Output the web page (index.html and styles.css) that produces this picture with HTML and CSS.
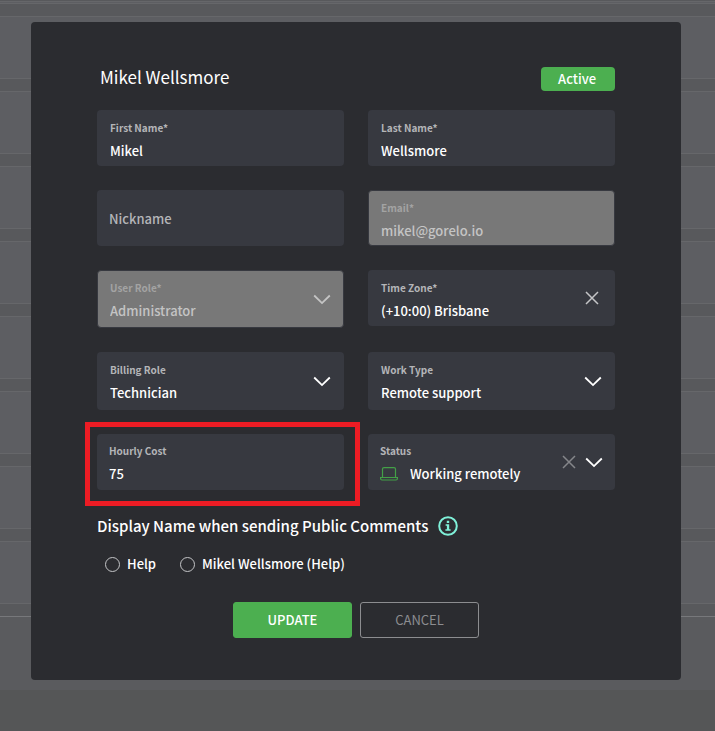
FILE: index.html
```
<!DOCTYPE html>
<html lang="en">
<head>
    <meta charset="UTF-8">
    <meta name="viewport" content="width=device-width, initial-scale=1">
    <title>Mikel Wellsmore</title>
    <link rel="stylesheet" href="styles.css">
</head>
<body>
    <svg class="sprite" aria-hidden="true">
        <symbol id="chevron" viewBox="0 0 18 18">
            <path d="M1.2 5.5 L9 13.1 L16.8 5.5" fill="none" stroke="currentColor" stroke-width="1.8"/>
        </symbol>
        <symbol id="cross" viewBox="0 0 18 18">
            <path d="M2 3 L14 15 M14 3 L2 15" fill="none" stroke="currentColor" stroke-width="1.5"/>
        </symbol>
    </svg>

    <main class="page">
        <form class="modal">
            <header class="modal-header">
                <h1>Mikel Wellsmore</h1>
                <span class="badge">Active</span>
            </header>

            <div class="fields">
                <div class="field">
                    <div class="field-main">
                        <label for="firstName">First Name*</label>
                        <input type="text" id="firstName" value="Mikel">
                    </div>
                </div>
                <div class="field">
                    <div class="field-main">
                        <label for="lastName">Last Name*</label>
                        <input type="text" id="lastName" value="Wellsmore">
                    </div>
                </div>
                <div class="field field-empty">
                    <div class="field-main">
                        <input type="text" id="nickname" placeholder="Nickname" aria-label="Nickname">
                    </div>
                </div>
                <div class="field field-disabled">
                    <div class="field-main">
                        <label for="email">Email*</label>
                        <input type="email" id="email" value="mikel@gorelo.io" disabled>
                    </div>
                </div>
                <div class="field field-disabled field-select">
                    <div class="field-main">
                        <label for="userRole">User Role*</label>
                        <select id="userRole" disabled><option>Administrator</option></select>
                    </div>
                    <svg class="icon"><use href="#chevron"/></svg>
                </div>
                <div class="field">
                    <div class="field-main">
                        <label for="timeZone">Time Zone*</label>
                        <select id="timeZone"><option>(+10:00) Brisbane</option></select>
                    </div>
                    <button type="button" class="clear" aria-label="Clear time zone"><svg class="icon"><use href="#cross"/></svg></button>
                </div>
                <div class="field field-select">
                    <div class="field-main">
                        <label for="billingRole">Billing Role</label>
                        <select id="billingRole"><option>Technician</option></select>
                    </div>
                    <svg class="icon"><use href="#chevron"/></svg>
                </div>
                <div class="field field-select">
                    <div class="field-main">
                        <label for="workType">Work Type</label>
                        <select id="workType"><option>Remote support</option></select>
                    </div>
                    <svg class="icon"><use href="#chevron"/></svg>
                </div>
                <div class="field field-marked">
                    <div class="field-main">
                        <label for="hourlyCost">Hourly Cost</label>
                        <input type="text" id="hourlyCost" value="75">
                    </div>
                </div>
                <div class="field field-status">
                    <div class="field-main">
                        <label for="status">Status</label>
                        <div class="status-value">
                            <svg class="laptop" viewBox="0 0 18 14" fill="none" stroke="currentColor" stroke-width="1.2">
                                <path d="M2.5 10.5 V2 Q2.5 .6 4 .6 H14 Q15.5 .6 15.5 2 V10.5"/>
                                <path d="M.6 10.5 H17.4 V11.5 Q17.4 13 16 13 H2 Q.6 13 .6 11.5 Z"/>
                            </svg>
                            <select id="status"><option>Working remotely</option></select>
                        </div>
                    </div>
                    <button type="button" class="clear clear-dim" aria-label="Clear status"><svg class="icon"><use href="#cross"/></svg></button>
                    <svg class="icon"><use href="#chevron"/></svg>
                </div>
            </div>

            <fieldset>
                <legend>
                    Display Name when sending Public Comments
                    <svg class="info" viewBox="0 0 20 20">
                        <circle cx="10" cy="10" r="8.8" fill="none" stroke="currentColor" stroke-width="2"/>
                        <path d="M8.8 4.8 H11.2 V7 H8.8 Z M7.6 8.2 H11.2 V13.2 H12.6 V14.8 H7.4 V13.2 H8.9 V9.7 H7.6 Z" fill="currentColor"/>
                    </svg>
                </legend>
                <div class="radios">
                    <label><input type="radio" name="displayName">Help</label>
                    <label><input type="radio" name="displayName">Mikel Wellsmore (Help)</label>
                </div>
            </fieldset>

            <div class="actions">
                <button type="submit" class="btn btn-primary">UPDATE</button>
                <button type="button" class="btn">CANCEL</button>
            </div>
        </form>
    </main>
</body>
</html>
```
FILE: styles.css
```
* {
    box-sizing: border-box;
}
body {
    margin: 0;
    min-height: 100vh;
    background-color: #555657;
    color: #fff;
    font-family: "Noto Sans CJK SC", "Noto Sans", sans-serif;
    font-size: 13px;
    font-weight: 500;
    line-height: 20px;
}
.sprite {
    display: none;
}
/* dimmed table rows behind the dialog */
.page {
    padding: 22px 34px 10px 31px;
    background:
        linear-gradient(#5a5b5e, #5a5b5e) 0 617px / 100% 100% no-repeat,
        linear-gradient(#77787b, #77787b) 0 616px / 100% 1px no-repeat,
        repeating-linear-gradient(#66676a 0 1px, #58595c 1px 13px, #66676a 13px 14px, #5d5e62 14px 75px) 0 3px;
}
.modal {
    max-width: 650px;
    margin: 0 auto;
    padding: 44px 66px 42px;
    background-color: #2b2c30;
    border-radius: 4px;
}
.modal-header {
    display: flex;
    justify-content: space-between;
    align-items: center;
    height: 25px;
    margin-bottom: 19px;
    padding-left: 3px;
}
h1 {
    margin: 0;
    padding-bottom: 4px;
    font-size: 17px;
    font-weight: 400;
    line-height: 20px;
}
.badge {
    height: 24px;
    padding: 2px 19px 2px 17px;
    background-color: #4caf50;
    border-radius: 4px;
}
.fields {
    display: grid;
    grid-template-columns: 1fr 1fr;
    gap: 24px;
    align-items: start;
}
.field {
    display: flex;
    align-items: center;
    position: relative;
    height: 56px;
    padding: 0 13px;
    background-color: #373940;
    border-radius: 4px;
}
.field-main {
    flex: 1;
    min-width: 0;
    padding-top: 2px;
}
.field-select {
    height: 58px;
}
.field-select .field-main,
.field-marked .field-main,
.field-status .field-main {
    padding-top: 0;
}
.field-empty,
.field-marked,
.field-status {
    padding: 0 12px;
}
.field label {
    display: block;
    color: #b4b5b8;
    font-size: 10px;
    font-weight: 700;
    line-height: 24px;
}
.field input,
.field select {
    display: block;
    width: 100%;
    height: 22px;
    margin: 0;
    padding: 0;
    border: 0;
    outline: 0;
    appearance: none;
    background: none;
    color: #fff;
    font: inherit;
    line-height: 22px;
    opacity: 1;
}
.field input::placeholder {
    color: #b4b5b8;
    opacity: 1;
}
.field-disabled {
    background-color: #787878;
    border: 1px solid #373940;
    padding: 0 12px;
}
.field-disabled label {
    color: #a3a3a3;
}
.field-disabled input,
.field-disabled select,
.field-disabled .icon {
    color: #c4c4c4;
}
.field-marked::after {
    content: "";
    position: absolute;
    inset: -12px -16px -16px -12px;
    border: 5px solid #ed1c24;
    pointer-events: none;
}
.icon {
    display: block;
    width: 18px;
    height: 18px;
    color: #fff;
}
.clear {
    margin: 0;
    padding: 0;
    border: 0;
    background: none;
    cursor: pointer;
}
.clear .icon {
    color: #c4c5c7;
}
.clear-dim {
    margin-right: 6px;
}
.clear-dim .icon {
    color: #85868a;
}
.status-value {
    display: flex;
    align-items: center;
    gap: 12px;
}
.laptop {
    flex: none;
    width: 18px;
    height: 14px;
    color: #43a047;
}
fieldset {
    margin: 24px 0 0;
    padding: 0;
    border: 0;
}
legend {
    display: flex;
    align-items: center;
    gap: 10px;
    padding: 0;
    font-size: 15px;
    font-weight: 500;
    line-height: 24px;
}
.info {
    width: 20px;
    height: 20px;
    color: #7ff0d8;
}
.radios {
    display: flex;
    gap: 24px;
    padding: 16px 8px 0;
}
.radios label {
    display: flex;
    align-items: center;
    gap: 7px;
}
.radios input {
    width: 15px;
    height: 15px;
    margin: 0;
    appearance: none;
    border: 1px solid #c4c5c7;
    border-radius: 50%;
}
.radios input:checked {
    background: radial-gradient(#4caf50 50%, transparent 55%);
}
.actions {
    display: flex;
    justify-content: center;
    gap: 8px;
    margin-top: 28px;
}
.btn {
    width: 119px;
    height: 36px;
    padding: 0;
    border: 1px solid #8c8d90;
    border-radius: 3px;
    background: none;
    color: #8c8d90;
    font: inherit;
    font-weight: 400;
    cursor: pointer;
}
.btn-primary {
    background-color: #4caf50;
    border-color: #4caf50;
    color: #fff;
    font-weight: 500;
}
```
